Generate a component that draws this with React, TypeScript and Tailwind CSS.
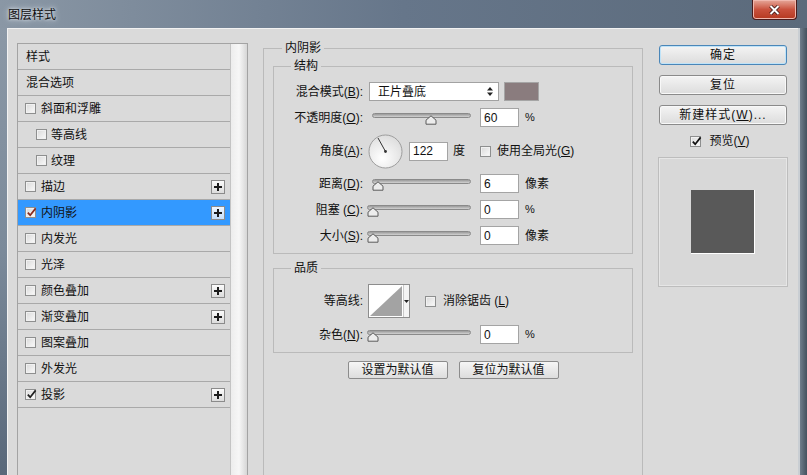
import React from 'react';

const FONT = "font-['Liberation_Sans','Noto_Sans_CJK_SC',sans-serif]";

function Box({ checked = false, mark = '#1f1f1f' }: { checked?: boolean; mark?: string }) {
  return (
    <span className="relative inline-flex h-[11px] w-[11px] shrink-0 items-center justify-center border border-[#8e8f8f] bg-linear-to-br from-[#d9d9d9] to-[#fbfbfb] shadow-[inset_0_0_0_1px_#f1f1f1]">
      {checked && (
        <svg width="11" height="11" viewBox="0 0 11 11" className="absolute left-[0px] top-[-1px]">
          <path d="M1.8 5.6 L4.2 8.2 L9.6 1.4" fill="none" stroke={mark} strokeWidth="1.7" />
        </svg>
      )}
    </span>
  );
}

function Plus({ active = false }: { active?: boolean }) {
  return (
    <span
      className={
        'ml-auto flex h-[14px] w-[14px] items-center justify-center border border-[#8b8b8b] ' +
        (active ? 'bg-linear-to-b from-[#eef6ff] to-[#c4defa]' : 'bg-linear-to-b from-[#fbfbfb] to-[#dcdcdc]')
      }
    >
      <svg width="8" height="8" viewBox="0 0 8 8">
        <path d="M4 0 V8 M0 4 H8" stroke="#1c1c1c" strokeWidth="2" />
      </svg>
    </span>
  );
}

type Row = { label: string; head?: boolean; sub?: boolean; check?: boolean; plus?: boolean; active?: boolean; mark?: string };

const rows: Row[] = [
  { label: '样式', head: true },
  { label: '混合选项', head: true },
  { label: '斜面和浮雕' },
  { label: '等高线', sub: true },
  { label: '纹理', sub: true },
  { label: '描边', plus: true },
  { label: '内阴影', check: true, plus: true, active: true, mark: '#8a2a1e' },
  { label: '内发光' },
  { label: '光泽' },
  { label: '颜色叠加', plus: true },
  { label: '渐变叠加', plus: true },
  { label: '图案叠加' },
  { label: '外发光' },
  { label: '投影', check: true, plus: true },
];

function StyleList() {
  return (
    <div className="mt-[3px] flex h-[460px] w-[231px] shrink-0 border border-b-0 border-[#a3a3a3]">
      <div className="w-[212px]">
        {rows.map((r) => (
          <div
            key={r.label}
            className={
              'flex h-[26px] items-center border-b border-[#a9a9a9] pr-[5px] text-[12px] text-[#111] ' +
              (r.head ? 'pl-[8px] ' : r.sub ? 'pl-[18px] ' : 'pl-[7px] ') +
              (r.active ? 'bg-[#3399ff]' : '')
            }
          >
            {!r.head && <Box checked={r.check} mark={r.mark} />}
            <span className={r.head ? '' : r.sub ? 'ml-[4px]' : 'ml-[5px]'}>{r.label}</span>
            {r.plus && <Plus active={r.active} />}
          </div>
        ))}
      </div>
      <div className="w-[17px] border-l border-[#c4c4c4] bg-linear-to-r from-[#ededed] via-[#f7f7f7] to-[#d6d6d6]" />
    </div>
  );
}

function Key({ k }: { k: string }) {
  return (
    <>
      (<span className="underline">{k}</span>):
    </>
  );
}

function Field({ value }: { value: string }) {
  return (
    <div className="flex h-[19px] w-[39px] shrink-0 items-center border border-[#a4a4a4] bg-white pl-[3px] text-[12px] text-[#111]">
      {value}
    </div>
  );
}

function Slider({ trackLeft, thumb }: { trackLeft: number; thumb: number }) {
  return (
    <div className="relative h-[19px] w-[104px] shrink-0">
      <div
        className="absolute right-[0px] top-[5px] h-[5px] rounded-full border border-[#8a8a8a] bg-linear-to-b from-[#9a9a9a] to-[#d2d2d2]"
        style={{ left: trackLeft }}
      />
      <svg className="absolute top-[7px]" style={{ left: thumb - 6 }} width="12" height="10" viewBox="0 0 12 10">
        <path d="M6 0.8 L11 5.2 V9.2 H1 V5.2 Z" fill="#ececec" stroke="#5a5a5a" strokeWidth="1" />
      </svg>
    </div>
  );
}

function Label({ children }: { children: React.ReactNode }) {
  return <div className="w-[89px] shrink-0 text-right text-[12px] text-[#111]">{children}</div>;
}

function Dial() {
  return (
    <svg width="35" height="35" viewBox="0 0 35 35" className="shrink-0">
      <defs>
        <radialGradient id="dg" cx="40%" cy="70%" r="70%">
          <stop offset="0%" stopColor="#ffffff" />
          <stop offset="100%" stopColor="#dedede" />
        </radialGradient>
      </defs>
      <circle cx="17.5" cy="17.5" r="16.5" fill="url(#dg)" stroke="#9d9d9d" />
      <line x1="17.5" y1="17.5" x2="10" y2="4" stroke="#333" strokeWidth="1" />
      <circle cx="17.5" cy="17.5" r="1.4" fill="#333" />
    </svg>
  );
}

function Contour() {
  return (
    <div className="flex h-[34px] w-[42px] shrink-0 border border-[#8d8d8d] bg-white">
      <svg width="34" height="32" viewBox="0 0 34 32">
        <polygon points="1,31 33,1 33,31" fill="#a3a3a3" />
      </svg>
      <div className="flex flex-1 items-center justify-center border-l border-[#c9c9c9] bg-[#f4f4f4]">
        <svg width="5" height="3" viewBox="0 0 5 3">
          <polygon points="0,0 5,0 2.5,3" fill="#222" />
        </svg>
      </div>
    </div>
  );
}

function MainPanel() {
  return (
    <fieldset className="ml-[15px] h-[460px] w-[380px] shrink-0 border border-[#bababa] px-[9px]">
      <legend className="ml-[9px] px-[3px] text-[12px] leading-[16px] text-[#111]">内阴影</legend>

      <fieldset className="mt-[2px] border border-[#bababa]">
        <legend className="ml-[17px] px-[3px] text-[12px] leading-[16px] text-[#111]">结构</legend>
        <div className="flex flex-col pb-[8px] pt-[8px]">
          <div className="flex h-[19px] items-center">
            <Label>
              混合模式<Key k="B" />
            </Label>
            <div className="ml-[6px] flex h-[19px] w-[130px] items-center border border-[#a2a2a2] bg-white pl-[8px] text-[12px] text-[#111]">
              正片叠底
              <svg className="ml-auto mr-[5px]" width="6" height="9" viewBox="0 0 6 9">
                <polygon points="3,0 6,3.5 0,3.5" fill="#222" />
                <polygon points="0,5.5 6,5.5 3,9" fill="#222" />
              </svg>
            </div>
            <div className="ml-[5px] h-[19px] w-[35px] border border-[#a5a5a5] bg-[#8a7c7e]" />
          </div>

          <div className="mt-[7px] flex h-[19px] items-center">
            <Label>
              不透明度<Key k="O" />
            </Label>
            <div className="ml-[4px]">
              <Slider trackLeft={5} thumb={64} />
            </div>
            <div className="ml-[9px]">
              <Field value="60" />
            </div>
            <span className="ml-[6px] text-[11px] text-[#111]">%</span>
          </div>

          <div className="mt-[7px] flex h-[34px] items-center">
            <Label>
              角度<Key k="A" />
            </Label>
            <div className="ml-[5px]">
              <Dial />
            </div>
            <div className="ml-[6px]">
              <Field value="122" />
            </div>
            <span className="ml-[5px] text-[12px] text-[#111]">度</span>
            <span className="ml-[15px] flex">
              <Box />
            </span>
            <span className="ml-[6px] text-[12px] text-[#111]">
              使用全局光(<span className="underline">G</span>)
            </span>
          </div>

          <div className="mt-[6px] flex h-[19px] items-center">
            <Label>
              距离<Key k="D" />
            </Label>
            <div className="ml-[4px]">
              <Slider trackLeft={5} thumb={11} />
            </div>
            <div className="ml-[9px]">
              <Field value="6" />
            </div>
            <span className="ml-[6px] text-[12px] text-[#111]">像素</span>
          </div>

          <div className="mt-[7px] flex h-[19px] items-center">
            <Label>
              阻塞 <Key k="C" />
            </Label>
            <div className="ml-[4px]">
              <Slider trackLeft={0} thumb={6} />
            </div>
            <div className="ml-[9px]">
              <Field value="0" />
            </div>
            <span className="ml-[6px] text-[11px] text-[#111]">%</span>
          </div>

          <div className="mt-[7px] flex h-[19px] items-center">
            <Label>
              大小<Key k="S" />
            </Label>
            <div className="ml-[4px]">
              <Slider trackLeft={0} thumb={6} />
            </div>
            <div className="ml-[9px]">
              <Field value="0" />
            </div>
            <span className="ml-[6px] text-[12px] text-[#111]">像素</span>
          </div>
        </div>
      </fieldset>

      <fieldset className="mt-[6px] border border-[#bababa]">
        <legend className="ml-[17px] px-[3px] text-[12px] leading-[16px] text-[#111]">品质</legend>
        <div className="flex flex-col pb-[8px] pt-[8px]">
          <div className="flex h-[34px] items-center">
            <Label>等高线:</Label>
            <div className="ml-[5px]">
              <Contour />
            </div>
            <span className="ml-[15px] flex">
              <Box />
            </span>
            <span className="ml-[7px] text-[12px] text-[#111]">
              消除锯齿 (<span className="underline">L</span>)
            </span>
          </div>
          <div className="mt-[7px] flex h-[19px] items-center">
            <Label>
              杂色<Key k="N" />
            </Label>
            <div className="ml-[4px]">
              <Slider trackLeft={0} thumb={6} />
            </div>
            <div className="ml-[9px]">
              <Field value="0" />
            </div>
            <span className="ml-[6px] text-[11px] text-[#111]">%</span>
          </div>
        </div>
      </fieldset>

      <div className="mt-[8px] flex justify-center gap-[11px]">
        {['设置为默认值', '复位为默认值'].map((t) => (
          <button
            key={t}
            className="flex h-[18px] w-[100px] items-center justify-center rounded-[2px] border border-[#8c8c8c] bg-linear-to-b from-[#f6f6f6] to-[#dddddd] text-[12px] text-[#111]"
          >
            {t}
          </button>
        ))}
      </div>
    </fieldset>
  );
}

function SideButton({ children, primary = false }: { children: React.ReactNode; primary?: boolean }) {
  return (
    <button
      className={
        'flex h-[20px] w-[128px] items-center justify-center rounded-[3px] border bg-linear-to-b from-[#f4f4f4] to-[#dcdcdc] text-[12px] tracking-[1px] text-[#111] ' +
        (primary ? 'border-[#4a86b8] shadow-[inset_0_0_0_1px_#bfe3f8]' : 'border-[#8a8a8a] shadow-[inset_0_0_0_1px_#f8f8f8]')
      }
    >
      {children}
    </button>
  );
}

function SidePanel() {
  return (
    <div className="ml-[15px] flex w-[130px] shrink-0 flex-col">
      <div className="mt-[5px] flex flex-col gap-[10px] pl-[1px]">
        <SideButton primary>确定</SideButton>
        <SideButton>复位</SideButton>
        <SideButton>
          新建样式(<span className="underline">W</span>)...
        </SideButton>
      </div>
      <div className="mt-[7px] flex items-center justify-center gap-[8px] pr-[6px] text-[12px] text-[#111]">
        <Box checked mark="#111" />
        <span>
          预览(<span className="underline">V</span>)
        </span>
      </div>
      <div className="mt-[7px] flex h-[130px] w-[130px] items-center justify-center border border-[#bdbdbd] bg-[#d8d8d8] shadow-[inset_0_0_0_1px_#e6e6e6]">
        <div className="h-[64px] w-[64px] border-b border-r border-white bg-[#595959]" />
      </div>
    </div>
  );
}

export default function App() {
  return (
    <div className={'flex h-[475px] w-[807px] flex-col overflow-hidden bg-[#5d6b7a] ' + FONT}>
      <div className="flex h-[28px] shrink-0 items-start bg-linear-to-r from-[#8a97a5] via-[#66768a] to-[#5b6a7b]">
        <span className="ml-[8px] mt-[7px] text-[12px] leading-[16px] text-[#0c0c0c] [text-shadow:0_0_6px_#e6ecf2,0_0_3px_#e6ecf2]">
          图层样式
        </span>
        <div className="ml-auto mr-[10px] flex h-[20px] w-[45px] items-center justify-center rounded-b-[4px] border border-t-0 border-[#4a1b1b] bg-linear-to-b from-[#e5a79a] via-[#c9513d] to-[#b5381f] shadow-[inset_0_0_0_1px_#f0b8ae]">
          <svg width="11" height="10" viewBox="0 0 11 10">
            <path d="M1.5 1 L9.5 9 M9.5 1 L1.5 9" stroke="#3a1512" strokeWidth="3.6" />
            <path d="M1.5 1 L9.5 9 M9.5 1 L1.5 9" stroke="#ffffff" strokeWidth="2" />
          </svg>
        </div>
      </div>
      <div className="flex min-h-0 flex-1">
        <div className="w-[7px] shrink-0 bg-linear-to-b from-[#8b98a6] via-[#7b8a9a] to-[#59687a]" />
        <div className="flex flex-1 border-l border-t border-[#f2f2f2] bg-[#dadada] pl-[9px] pt-[11px]">
          <StyleList />
          <MainPanel />
          <SidePanel />
        </div>
        <div className="w-[9px] shrink-0 border-l-2 border-[#c9ced3] bg-linear-to-r from-[#6f7d8b] to-[#44515e]" />
      </div>
    </div>
  );
}
